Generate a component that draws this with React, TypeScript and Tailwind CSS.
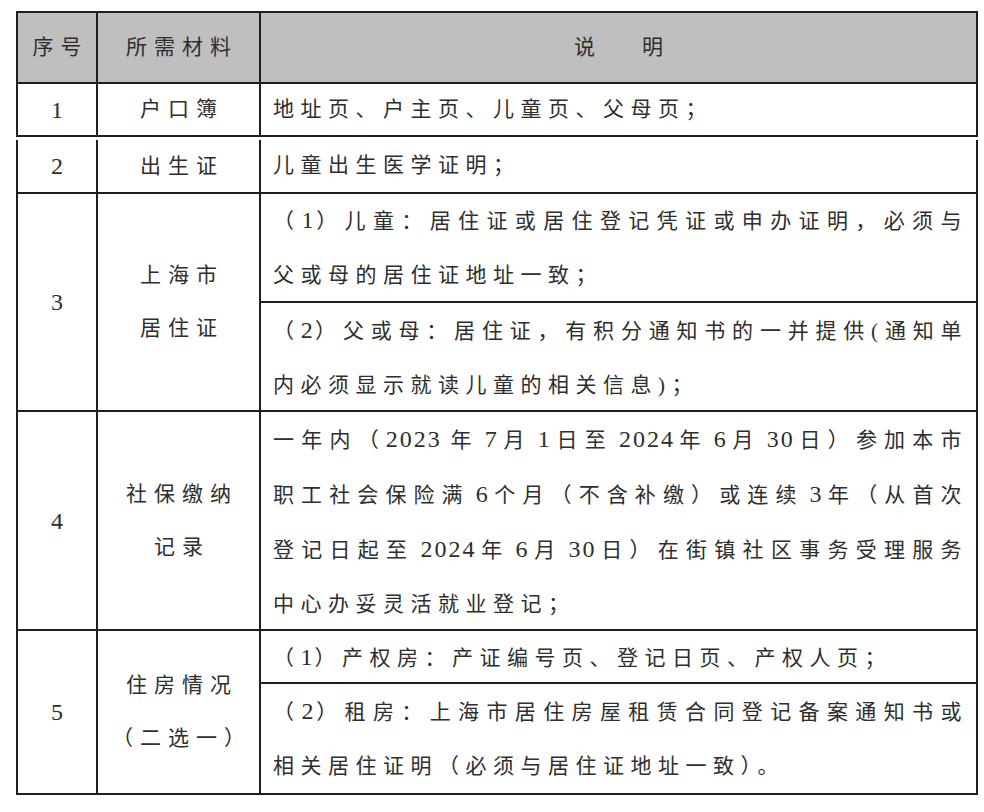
import React from 'react';

// digits are set a little larger and tighter than the CJK text
const N = ({ children, tight }: { children: React.ReactNode; tight?: boolean }) => (
  <span className={`text-[24px] tracking-[2px] ${tight ? '' : 'ml-[6px] mr-[4px]'}`}>{children}</span>
);

function Line({ children, full }: { children: React.ReactNode; full?: boolean }) {
  return <div className={full ? 'whitespace-nowrap [text-align-last:justify]' : 'whitespace-nowrap'}>{children}</div>;
}

const line = 'border-[#1f1f1f]';

function Row({ no, label, height, gap, children }: { no: string; label: React.ReactNode; height: string; gap?: boolean; children: React.ReactNode }) {
  return (
    <div className={`flex border-x-2 border-b-2 ${line} ${height} ${gap ? 'mt-[3px]' : ''}`}>
      <div className={`flex w-[80px] items-center justify-center border-r-2 ${line} text-[24px] tracking-normal`}>{no}</div>
      <div className={`flex w-[163px] flex-col items-center justify-center border-r-2 ${line} pl-[7px] leading-[53px] tracking-[7px]`}>
        {label}
      </div>
      <div className="flex flex-1 flex-col">{children}</div>
    </div>
  );
}

function App() {
  return (
    <div className="min-h-screen bg-white pl-[16px] pt-[11px] font-['Liberation_Serif','Noto_Sans_CJK_SC',serif] text-[21px] tracking-[6.5px] text-[#2e2e2e]">
      <div className="w-[962px]">
        {/* header */}
        <div className={`flex h-[73px] border-2 ${line} bg-[#bfbfbf]`}>
          <div className={`flex w-[80px] items-center justify-center border-r-2 ${line} pl-[7px] tracking-[7px]`}>序号</div>
          <div className={`flex w-[163px] items-center justify-center border-r-2 ${line} pl-[7px] tracking-[7px]`}>所需材料</div>
          <div className="flex flex-1 items-center justify-center gap-[47px] tracking-normal">
            <span>说</span>
            <span>明</span>
          </div>
        </div>

        <Row no="1" label={<div>户口簿</div>} height="h-[53px]">
          <div className="flex flex-1 items-center pl-[12px] pr-[8px]">
            <Line>地址页、户主页、儿童页、父母页；</Line>
          </div>
        </Row>

        <Row no="2" label={<div>出生证</div>} height="h-[54px]" gap>
          <div className="flex flex-1 items-center pl-[12px] pr-[8px]">
            <Line>儿童出生医学证明；</Line>
          </div>
        </Row>

        <Row no="3" label={<><div>上海市</div><div>居住证</div></>} height="h-[218px]">
          <div className={`flex h-[109px] flex-col justify-center border-b-2 ${line} pl-[12px] pr-[8px] leading-[54px]`}>
            <Line full>（<N tight>1</N>）儿童：居住证或居住登记凭证或申办证明，必须与</Line>
            <Line>父或母的居住证地址一致；</Line>
          </div>
          <div className="flex flex-1 flex-col justify-center pl-[12px] pr-[8px] leading-[54px]">
            <Line full>（<N tight>2</N>）父或母：居住证，有积分通知书的一并提供(通知单</Line>
            <Line>内必须显示就读儿童的相关信息)；</Line>
          </div>
        </Row>

        <Row no="4" label={<><div>社保缴纳</div><div>记录</div></>} height="h-[219px]">
          <div className="flex flex-1 flex-col justify-center pl-[12px] pr-[8px] leading-[54px]">
            <Line full>
              一年内（<N tight>2023</N>
              <span className="ml-[8px]">年</span><N>7</N>月<N>1</N>日至<N>2024</N>年<N>6</N>月<N>30</N>日）参加本市
            </Line>
            <Line full>
              职工社会保险满<N>6</N>个月（不含补缴）或连续<N>3</N>年（从首次
            </Line>
            <Line full>
              登记日起至<N>2024</N>年<N>6</N>月<N>30</N>日）在街镇社区事务受理服务
            </Line>
            <Line>中心办妥灵活就业登记；</Line>
          </div>
        </Row>

        <Row no="5" label={<><div>住房情况</div><div>（二选一）</div></>} height="h-[164px]">
          <div className={`flex h-[55px] items-center border-b-2 ${line} pl-[12px] pr-[8px]`}>
            <Line>（<N tight>1</N>）产权房：产证编号页、登记日页、产权人页；</Line>
          </div>
          <div className="flex flex-1 flex-col justify-center pl-[12px] pr-[8px] leading-[54px]">
            <Line full>（<N tight>2</N>）租房：上海市居住房屋租赁合同登记备案通知书或</Line>
            <Line>相关居住证明（必须与居住证地址一致）。</Line>
          </div>
        </Row>
      </div>
    </div>
  );
}

export default App;
